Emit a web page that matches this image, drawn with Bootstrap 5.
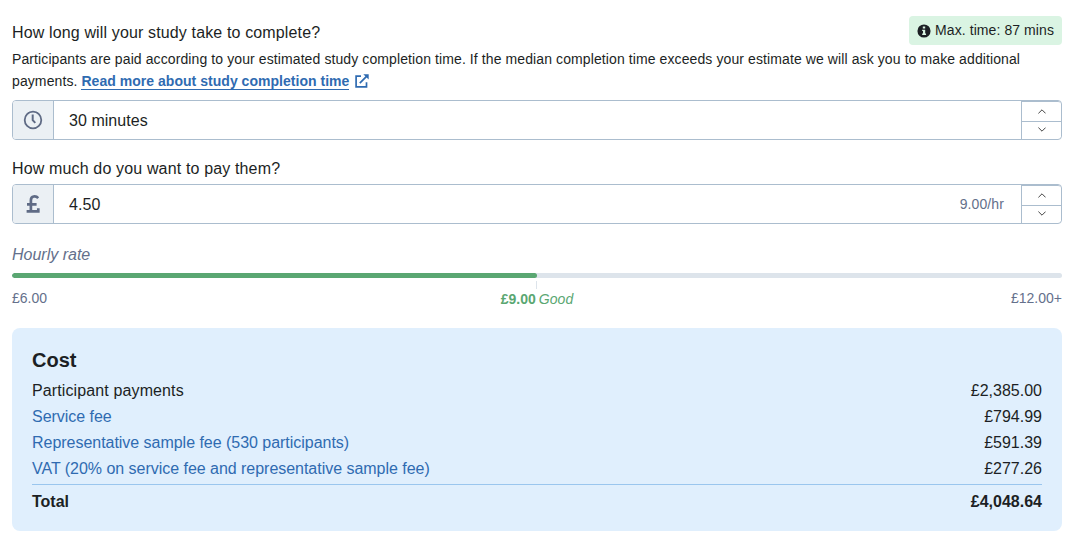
<!DOCTYPE html>
<html lang="en">
<head>
<meta charset="utf-8">
<meta name="viewport" content="width=device-width, initial-scale=1">
<title>Study cost</title>
<link href="https://cdn.jsdelivr.net/npm/bootstrap@5.3.0/dist/css/bootstrap.min.css" rel="stylesheet">
<style>
  body { font-family: "Liberation Sans", Arial, sans-serif; font-size: 16px; line-height: 24px; color: #1c1f24; background: #fff; overflow: hidden; }
  .page { padding: 16px 13px 0 12px; }
  .fs14 { font-size: 14px; line-height: 22px; }
  .time-row { height: 29px; }
  .time-row label { padding-top: 5px; letter-spacing: .14px; }
  .max-time { background: #daf4e3; height: 29px; padding: 0 8px; font-size: 14px; line-height: 20px; border-radius: 4px; width: 153px; }
  .max-time span { letter-spacing: .08px; padding-bottom: 1px; white-space: nowrap; }
  .help { margin: 3px 0 8px; letter-spacing: .1px; }
  .help a { color: #2f6bb1; text-decoration: none; letter-spacing: .03px; }
  .help a span { border-bottom: 1px solid #2f6bb1; }
  .help svg { margin-left: 6px; vertical-align: -2px; }
  .field { height: 40px; border: 1px solid #abbdce; border-radius: 4px; overflow: hidden; }
  .field-icon { width: 41px; background: #ebf0f4; border-right: 1px solid #abbdce; color: #5f6b85; }
  .field input { border: 0; outline: 0; padding: 2px 0 0 15px; color: inherit; background: transparent; min-width: 0; letter-spacing: .05px; }
  .per-hour { padding-right: 17px; letter-spacing: .1px; }
  .steps { width: 40px; border-left: 1px solid #abbdce; }
  .steps button { border: 0; background: #fff; padding: 0; color: #444; }
  .steps button:first-child { height: 21px; border-top: 1px solid #abbdce; border-bottom: 1px solid #abbdce; border-top-right-radius: 3px; }
  .steps button:last-child { height: 15px; }
  .pay-label { padding: 17px 0 3px; letter-spacing: .15px; }
  .muted { color: #64708b; }
  .rate-title { padding: 19px 0 6px; }
  .rate { height: 5px; background: #dde4eb; border-radius: 3px; }
  .rate .progress-bar { background: #5aa772; border-radius: 3px; }
  .tick { width: 1px; height: 8px; background: #dde4eb; margin: 3px auto 0; position: relative; left: -1px; }
  .good { color: #5aa772; padding-top: 1px; }
  .good i { margin-left: -1px; letter-spacing: .1px; }
  .scale { height: 41px; margin-top: -2px; }
  .scale > * { flex: 1 1 0; }
  .cost { background: #e0effd; border-radius: 8px; height: 203px; padding: 18px 20px 0; }
  .cost h2 { font-size: 20px; line-height: 28px; margin-bottom: 4px; }
  .line { height: 26px; line-height: 26px; }
  .line a { color: #2f6bb1; text-decoration: none; letter-spacing: -.03px; }
  .payments { letter-spacing: .12px; }
  .sum { border-top: 1px solid #9ac6ee; margin-top: 2px; padding-top: 5px; }
</style>
</head>
<body>
<main class="page">
  <div class="time-row d-flex justify-content-between">
    <label for="time">How long will your study take to complete?</label>
    <div class="max-time d-flex align-items-center justify-content-between">
      <svg width="14" height="14" viewBox="0 0 13 13"><circle cx="6.5" cy="6.5" r="6.1" fill="#1c1f24"/><path d="M5.4 2.3h2.2v1.9H5.4zM4.8 5.3h2.8v3.5h.8v1.3H4.8V8.8h.8V6.6h-.8z" fill="#daf4e3"/></svg>
      <span>Max. time: 87 mins</span>
    </div>
  </div>
  <p class="help fs14">Participants are paid according to your estimated study completion time. If the median completion time exceeds your estimate we will ask you to make additional<br>payments. <a href="#" class="fw-bold"><span>Read more about study completion time</span><svg width="14" height="14" viewBox="0 0 14 14" fill="none" stroke="currentColor" stroke-width="1.7"><path d="M6 2.2H1.1v10.7h10.4V8.2M4.8 9.1l7-7"/><path d="M8.3.2h5.4v5.4z" fill="currentColor" stroke="none"/></svg></a></p>

  <div class="field d-flex">
    <div class="field-icon d-flex align-items-center justify-content-center">
      <svg width="20" height="20" viewBox="0 0 20 20" fill="none" stroke="currentColor" stroke-width="1.8"><circle cx="10" cy="10" r="8.3"/><path d="M9.7 4.6v5.6l2.6 2.7" stroke-width="2"/></svg>
    </div>
    <input id="time" class="flex-grow-1" value="30 minutes">
    <div class="steps d-flex flex-column">
      <button class="d-flex align-items-center justify-content-center" aria-label="More"><svg width="8" height="5" viewBox="0 0 8 5" fill="none" stroke="currentColor"><path d="M.4 4.4 4 .8l3.6 3.6"/></svg></button>
      <button class="d-flex align-items-center justify-content-center" aria-label="Less"><svg width="8" height="5" viewBox="0 0 8 5" fill="none" stroke="currentColor"><path d="M.4.6 4 4.2 7.6.6"/></svg></button>
    </div>
  </div>

  <label for="pay" class="pay-label d-block">How much do you want to pay them?</label>
  <div class="field d-flex">
    <div class="field-icon d-flex align-items-center justify-content-center">
      <svg width="14" height="20" viewBox="0 0 14 20" fill="none" stroke="currentColor" stroke-width="2.7"><path d="M12.2 4.1C9.9 1.5 4.9 1.7 4.9 6.2V17.4M1 10.3h9.6M.6 17.4h12M12.3 18.7V14.2"/></svg>
    </div>
    <input id="pay" class="flex-grow-1" value="4.50">
    <span class="per-hour muted align-self-center fs14">9.00/hr</span>
    <div class="steps d-flex flex-column">
      <button class="d-flex align-items-center justify-content-center" aria-label="More"><svg width="8" height="5" viewBox="0 0 8 5" fill="none" stroke="currentColor"><path d="M.4 4.4 4 .8l3.6 3.6"/></svg></button>
      <button class="d-flex align-items-center justify-content-center" aria-label="Less"><svg width="8" height="5" viewBox="0 0 8 5" fill="none" stroke="currentColor"><path d="M.4.6 4 4.2 7.6.6"/></svg></button>
    </div>
  </div>

  <div class="rate-title muted fst-italic">Hourly rate</div>
  <div class="progress rate"><div class="progress-bar" style="width:50%"></div></div>
  <div class="tick"></div>
  <div class="scale d-flex fs14 muted">
    <span>£6.00</span>
    <span class="good text-center"><b>£9.00</b> <i>Good</i></span>
    <span class="text-end">£12.00+</span>
  </div>

  <section class="cost">
    <h2 class="fw-bold">Cost</h2>
    <div class="line d-flex justify-content-between"><span class="payments">Participant payments</span><span>£2,385.00</span></div>
    <div class="line d-flex justify-content-between"><a href="#">Service fee</a><span>£794.99</span></div>
    <div class="line d-flex justify-content-between"><a href="#">Representative sample fee (530 participants)</a><span>£591.39</span></div>
    <div class="line d-flex justify-content-between"><a href="#">VAT (20% on service fee and representative sample fee)</a><span>£277.26</span></div>
    <div class="sum d-flex justify-content-between fw-bold"><span>Total</span><span>£4,048.64</span></div>
  </section>
</main>
<script src="https://cdn.jsdelivr.net/npm/bootstrap@5.3.0/dist/js/bootstrap.bundle.min.js"></script>
</body>
</html>
